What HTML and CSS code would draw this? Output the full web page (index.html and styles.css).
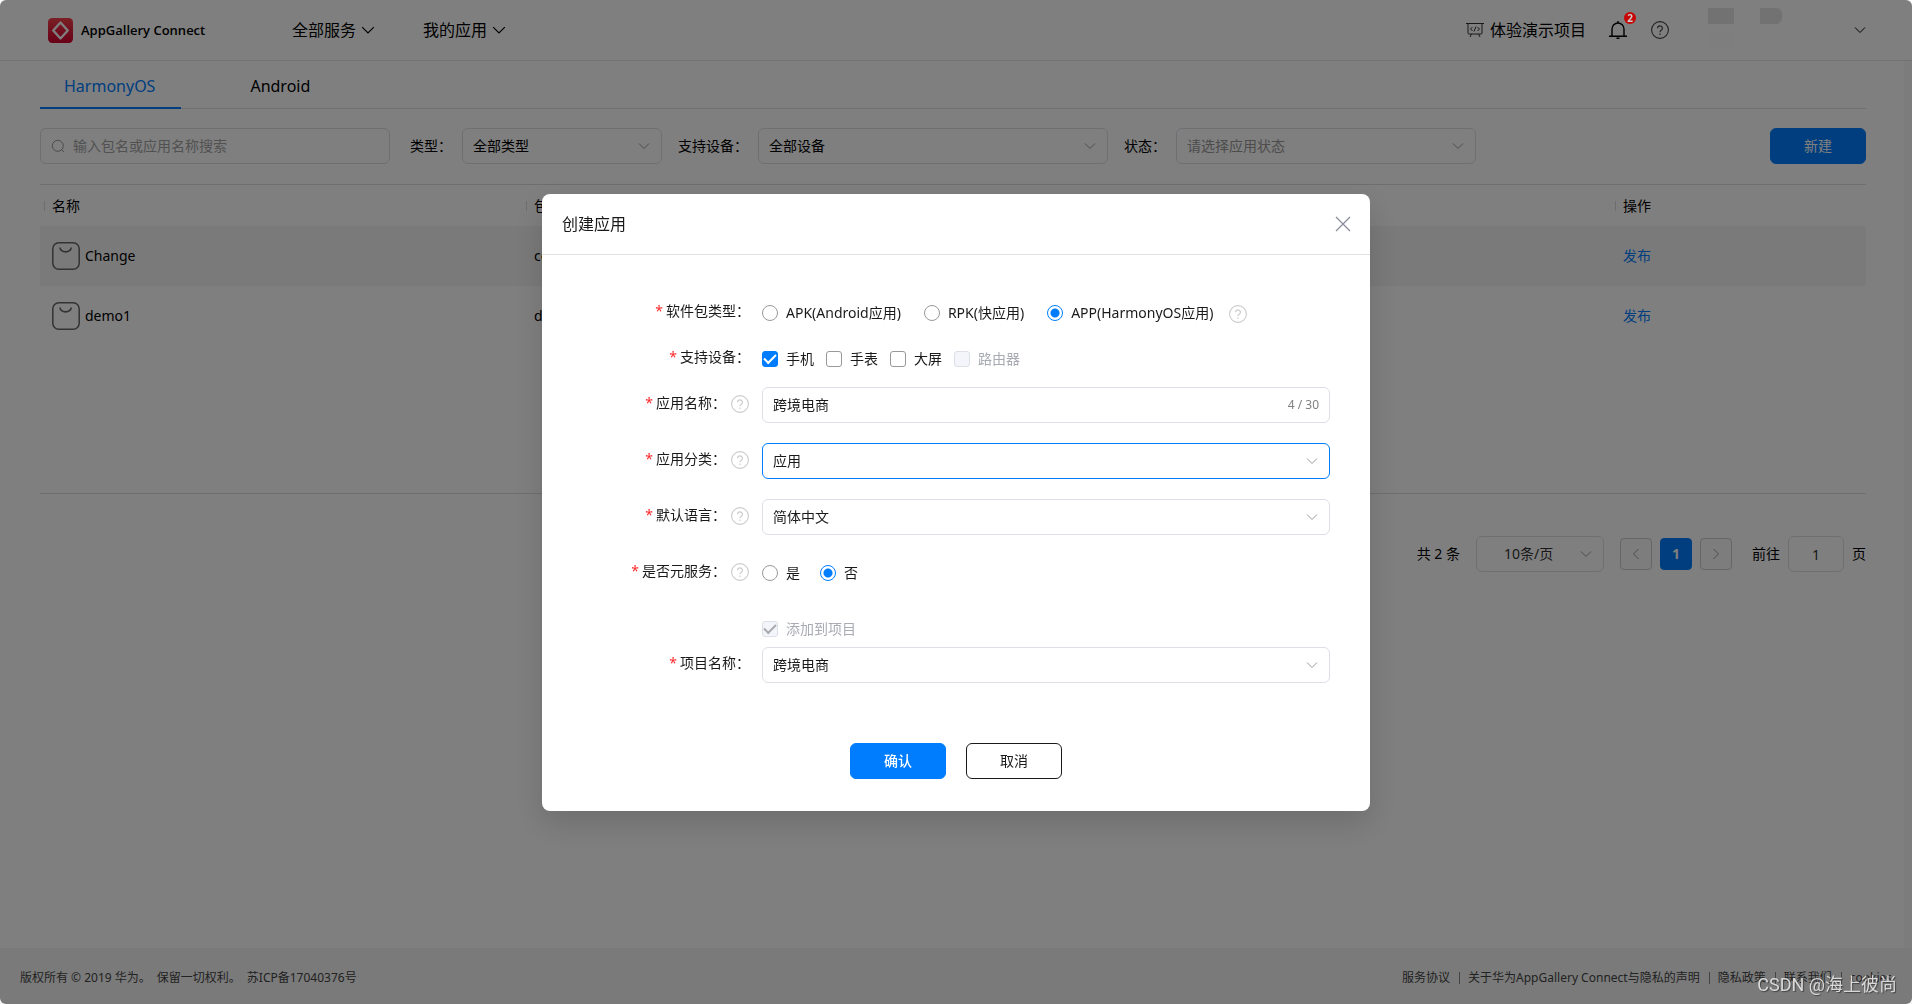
FILE: index.html
```html
<!DOCTYPE html>
<html lang="zh-CN">
<head>
<meta charset="utf-8">
<meta name="viewport" content="width=device-width, initial-scale=1">
<title>AppGallery Connect</title>
<link rel="stylesheet" href="styles.css">
</head>
<body>
<svg class="defs" aria-hidden="true">
  <symbol id="chevron" viewBox="0 0 12 12"><path d="M1 3.5l5 5 5-5" fill="none" stroke="currentColor"/></symbol>
  <symbol id="help" viewBox="0 0 18 18"><circle cx="9" cy="9" r="8.4" fill="none" stroke="currentColor" stroke-width="1.1"/><path d="M6.600 7.200a2.400 2.400 0 1 1 3.600 2.100C9.300 9.800 9 10.200 9 11.300" fill="none" stroke="currentColor" stroke-width="1.2"/><circle cx="9" cy="13.2" r=".8" fill="currentColor"/></symbol>
  <symbol id="bag" viewBox="0 0 28 28"><rect x=".8" y=".8" width="26.4" height="26.4" rx="6" fill="none" stroke="currentColor" stroke-width="1.5"/><path d="M8 5.5a5.6 4.4 0 0 0 11.2 0" fill="none" stroke="currentColor" stroke-width="1.6"/></symbol>
</svg>

<div class="page">
  <header class="topbar">
    <a class="brand" href="#">
      <svg class="brand-logo" viewBox="0 0 24 24" aria-hidden="true"><defs><linearGradient id="red" x2="0" y2="1"><stop stop-color="#f5404a"/><stop offset="1" stop-color="#d2002f"/></linearGradient></defs><rect width="24" height="24" rx="4" fill="url(#red)"/><path d="M12 4.4l7 7.6-7 7.6L5 12z" fill="none" stroke="#fff" stroke-width="2.2" stroke-linejoin="round"/></svg>
      <span>AppGallery Connect</span>
    </a>
    <nav class="topnav">
      <a href="#">全部服务<svg class="chev"><use href="#chevron"/></svg></a>
      <a href="#">我的应用<svg class="chev"><use href="#chevron"/></svg></a>
    </nav>
    <div class="tools">
      <a class="demo" href="#">
        <svg viewBox="0 0 18 16" aria-hidden="true"><path d="M0 1.5h18M2 1.5V11a1 1 0 0 0 1 1h12a1 1 0 0 0 1-1V1.5M5.5 12L4 15M12.500 12l1.500 3M6.500 5L4.500 7l2 2M11.500 5l2 2-2 2M10 4.500l-2 5" fill="none" stroke="currentColor" stroke-width="1"/></svg>
        体验演示项目
      </a>
      <a class="bell" href="#" aria-label="消息">
        <svg viewBox="0 0 18 18" aria-hidden="true"><path d="M3 15V8a6 6 0 0 1 12 0v7M0 15.300h18M9 2V0M7.500 17.200h3" fill="none" stroke="currentColor" stroke-width="1.400"/></svg>
        <span class="badge">2</span>
      </a>
      <a class="tophelp" href="#" aria-label="帮助"><svg><use href="#help"/></svg></a>
      <div class="account"><i></i><i></i><i></i></div>
      <button class="more" type="button" aria-label="账号菜单"><svg class="chev"><use href="#chevron"/></svg></button>
    </div>
  </header>

  <main class="content">
    <nav class="tabs">
      <a class="tab active" href="#">HarmonyOS</a>
      <a class="tab" href="#">Android</a>
    </nav>

    <form class="filters">
      <div class="search">
        <svg viewBox="0 0 14 14" aria-hidden="true"><circle cx="6.800" cy="6.800" r="5.500" fill="none" stroke="currentColor"/><path d="M10.500 10.500l2.500 2.500" stroke="currentColor"/></svg>
        <input type="text" aria-label="搜索" placeholder="输入包名或应用名称搜索">
      </div>
      <label for="f-type">类型：</label>
      <div class="select f-type"><select id="f-type"><option>全部类型</option></select><svg><use href="#chevron"/></svg></div>
      <label for="f-device">支持设备：</label>
      <div class="select f-device"><select id="f-device"><option>全部设备</option></select><svg><use href="#chevron"/></svg></div>
      <label for="f-state">状态：</label>
      <div class="select f-state empty"><select id="f-state"><option>请选择应用状态</option></select><svg><use href="#chevron"/></svg></div>
      <button class="btn primary create" type="button">新建</button>
    </form>

    <div class="table-area">
      <table>
        <colgroup><col class="c-name"><col><col class="c-action"></colgroup>
        <thead><tr><th>名称</th><th>包名</th><th>操作</th></tr></thead>
        <tbody>
          <tr class="hover"><td><span class="app"><svg><use href="#bag"/></svg>Change</span></td><td>com.change</td><td><a href="#">发布</a></td></tr>
          <tr><td><span class="app"><svg><use href="#bag"/></svg>demo1</span></td><td>demo1</td><td><a href="#">发布</a></td></tr>
        </tbody>
      </table>
    </div>

    <div class="pager">
      <span class="total">共 2 条</span>
      <div class="select page-size"><select aria-label="每页条数"><option>10条/页</option></select><svg><use href="#chevron"/></svg></div>
      <div class="pages">
        <button type="button" aria-label="上一页"><svg class="prev"><use href="#chevron"/></svg></button>
        <button type="button" class="current">1</button>
        <button type="button" aria-label="下一页"><svg class="next"><use href="#chevron"/></svg></button>
      </div>
      <label class="jump">前往<input type="text" value="1">页</label>
    </div>
  </main>

  <footer class="footer">
    <p><span>版权所有 © 2019 华为。</span><span>保留一切权利。</span><span>苏ICP备17040376号</span></p>
    <nav>
      <a href="#">服务协议</a><a href="#">关于华为AppGallery Connect与隐私的声明</a><a href="#">隐私政策</a><a href="#">联系我们</a><a href="#">cookies</a>
    </nav>
  </footer>
</div>

<div class="overlay">
  <section class="dialog" role="dialog" aria-modal="true" aria-labelledby="dlg-title">
    <header class="dialog-head">
      <h2 id="dlg-title">创建应用</h2>
      <button type="button" class="close" aria-label="关闭"><svg viewBox="0 0 16 16"><path d="M1 1l14 14M15 1L1 15" stroke="currentColor" stroke-width="1.300"/></svg></button>
    </header>
    <form class="form">
      <div class="row short" role="group" aria-labelledby="l-pkg">
        <span class="name" id="l-pkg"><b>*</b>软件包类型：</span>
        <div class="options radios wide">
          <label><input type="radio" name="pkg">APK(Android应用)</label>
          <label><input type="radio" name="pkg">RPK(快应用)</label>
          <label><input type="radio" name="pkg" checked>APP(HarmonyOS应用)</label>
          <svg class="help"><use href="#help"/></svg>
        </div>
      </div>
      <div class="row short" role="group" aria-labelledby="l-dev">
        <span class="name" id="l-dev"><b>*</b>支持设备：</span>
        <div class="options checks">
          <label><input type="checkbox" checked>手机</label>
          <label><input type="checkbox">手表</label>
          <label><input type="checkbox">大屏</label>
          <label><input type="checkbox" disabled>路由器</label>
        </div>
      </div>
      <div class="row">
        <label class="name" for="app-name"><b>*</b>应用名称：<svg class="help"><use href="#help"/></svg></label>
        <div class="field"><input id="app-name" type="text" value="跨境电商"><span>4 / 30</span></div>
      </div>
      <div class="row">
        <label class="name" for="app-cat"><b>*</b>应用分类：<svg class="help"><use href="#help"/></svg></label>
        <div class="select focus"><select id="app-cat"><option>应用</option></select><svg><use href="#chevron"/></svg></div>
      </div>
      <div class="row">
        <label class="name" for="app-lang"><b>*</b>默认语言：<svg class="help"><use href="#help"/></svg></label>
        <div class="select"><select id="app-lang"><option>简体中文</option></select><svg><use href="#chevron"/></svg></div>
      </div>
      <div class="row" role="group" aria-labelledby="l-meta">
        <span class="name" id="l-meta"><b>*</b>是否元服务：<svg class="help"><use href="#help"/></svg></span>
        <div class="options radios">
          <label><input type="radio" name="meta">是</label>
          <label><input type="radio" name="meta" checked>否</label>
        </div>
      </div>
      <div class="row tight">
        <div class="options checks"><label><input type="checkbox" checked disabled>添加到项目</label></div>
      </div>
      <div class="row last">
        <label class="name" for="project"><b>*</b>项目名称：</label>
        <div class="select"><select id="project"><option>跨境电商</option></select><svg><use href="#chevron"/></svg></div>
      </div>
      <div class="actions">
        <button type="button" class="btn primary strong">确认</button>
        <button type="button" class="btn outline">取消</button>
      </div>
    </form>
  </section>
</div>
<div class="watermark">CSDN @海上彼尚</div>
</body>
</html>
```
FILE: styles.css
```css
* { box-sizing: border-box; }

body {
  margin: 0;
  background: #fff;
  color: #000;
  font: 14px/20px "Noto Sans", "Noto Sans CJK SC", sans-serif;
}

a { color: inherit; text-decoration: none; }
p, h2 { margin: 0; }
svg { display: block; flex: none; }
button, input, select { font: inherit; color: inherit; }
button { padding: 0; cursor: pointer; }
.defs { position: absolute; width: 0; height: 0; }

.page { min-height: 100vh; display: flex; flex-direction: column; }

/* Top bar */
.topbar {
  display: flex;
  align-items: center;
  height: 61px;
  padding: 0 46px 0 48px;
  border-bottom: 1px solid #e4e4e4;
  font-size: 16px;
}
.topbar a { display: flex; align-items: center; }
.chev { width: 14px; height: 14px; }
.brand {
  gap: 8px;
  width: 154px;
  font-family: "Open Sans", sans-serif;
  font-size: 13px;
  font-weight: 600;
  white-space: nowrap;
}
.brand-logo { width: 25px; height: 25px; }
.topnav { display: flex; gap: 48px; margin-left: 90px; }
.topnav a { gap: 5px; }
.tools { display: flex; align-items: center; margin-left: auto; }
.demo { gap: 6px; }
.demo svg { width: 18px; height: 16px; color: #333; }
.bell { position: relative; margin-left: 23px; }
.bell svg { width: 18px; height: 18px; }
.badge {
  position: absolute;
  z-index: 20;
  left: 15px;
  top: -9px;
  width: 12px;
  height: 12px;
  border-radius: 50%;
  background: #c80505;
  color: #ccc;
  font-size: 10px;
  font-weight: 700;
  line-height: 12px;
  text-align: center;
}
.tophelp { margin-left: 24px; color: #444; }
.tophelp svg { width: 18px; height: 18px; }
.account {
  display: grid;
  grid-template-columns: 26px 22px;
  gap: 8px 26px;
  width: 146px;
  margin: 0 0 4px 39px;
}
.account i { height: 16px; background: #e4e4e4; }
.account i:nth-child(2) { border-top-right-radius: 6px; border-bottom-right-radius: 6px; }
.account i:nth-child(3) { background: #fcfcfc; }
.more { border: 0; background: none; }
.more .chev { width: 12px; height: 12px; }

/* Content */
.content {
  flex: 1;
  padding: 0 38px 0 40px;
  border-right: 8px solid #f8f8f8;
}
.tabs {
  display: flex;
  gap: 45px;
  height: 48px;
  border-bottom: 1px solid #e0e0e0;
  font-size: 16px;
}
.tab { height: 48px; padding: 15px 26px 0 24px; }
.tab.active { color: #007dff; border-bottom: 2px solid #007dff; }

.filters { display: flex; align-items: center; margin: 19px 0 20px; }
.filters > label { margin: 0 10px 0 16px; white-space: nowrap; }
.search {
  display: flex;
  align-items: center;
  gap: 8px;
  width: 350px;
  height: 36px;
  margin-right: 4px;
  padding: 0 10px;
  border: 1px solid #dcdcdc;
  border-radius: 6px;
  color: #999;
}
.search svg { width: 14px; height: 14px; }
.search input { flex: 1; min-width: 0; padding: 0; border: 0; outline: 0; background: none; }
.search input::placeholder { color: #a3a3a3; opacity: 1; }

.select { position: relative; height: 36px; }
.select select {
  appearance: none;
  width: 100%;
  height: 36px;
  padding: 0 32px 0 10px;
  border: 1px solid #dcdfe6;
  border-radius: 6px;
  background: #fff;
  outline: 0;
}
.select svg {
  position: absolute;
  right: 12px;
  top: 12px;
  width: 12px;
  height: 12px;
  color: #999;
  pointer-events: none;
}
.select.focus select { border-color: #007dff; }
.select.empty select { color: #999; }
.f-type { width: 200px; }
.f-device { width: 350px; }
.f-state { width: 300px; }

.btn { width: 96px; height: 36px; border: 1px solid #007dff; border-radius: 6px; }
.btn.primary { background: #007dff; color: #fff; }
.btn.strong { font-weight: 500; }
.btn.outline { background: #fff; border-color: #1a1a1a; color: #1a1a1a; }
.create { margin-left: auto; }

/* Table */
.table-area { min-height: 310px; border: 1px solid #ddd; border-width: 1px 0; }
table { width: 100%; table-layout: fixed; border-collapse: collapse; }
.c-name { width: 482px; }
.c-action { width: 255px; }
th, td { padding: 0 12px; text-align: left; font-weight: 400; }
th { height: 41px; background: linear-gradient(#ddd, #ddd) 4px 16px / 1px 10px no-repeat; }
td { height: 60px; }
td a { color: #007dff; }
.hover { background: #f5f5f5; }
.app { display: flex; align-items: center; gap: 5px; }
.app svg { width: 28px; height: 28px; color: #666; }

/* Pagination */
.pager { display: flex; align-items: center; gap: 16px; justify-content: flex-end; margin-top: 42px; }
.page-size { width: 128px; }
.page-size select { padding-left: 27px; color: #333; }
.pages { display: flex; gap: 8px; }
.pages button {
  display: grid;
  place-items: center;
  width: 32px;
  height: 32px;
  border: 1px solid #ccc;
  border-radius: 4px;
  background: #fafafa;
  color: #999;
}
.pages svg { width: 12px; height: 12px; }
.pages .current { border-color: #007dff; background: #007dff; color: #fff; font-weight: 700; }
.prev { transform: rotate(90deg); }
.next { transform: rotate(-90deg); }
.jump { display: flex; align-items: center; gap: 8px; margin-left: 4px; }
.jump input {
  width: 56px;
  height: 36px;
  padding: 0;
  border: 1px solid #dcdfe6;
  border-radius: 6px;
  text-align: center;
  color: #333;
}

/* Footer */
.footer {
  display: flex;
  align-items: center;
  justify-content: space-between;
  height: 56px;
  padding: 4px 20px 0;
  background: #f5f5f5;
  color: #444;
  font-size: 12px;
}
.footer p { display: flex; gap: 6px; }
.footer nav { display: flex; align-items: center; }
.footer nav a { line-height: 12px; }
.footer nav a + a { margin-left: 9px; padding-left: 8px; border-left: 1px solid #888; }

/* Dialog */
.overlay {
  position: fixed;
  inset: 0;
  z-index: 10;
  display: flex;
  align-items: center;
  justify-content: center;
  background: rgba(0, 0, 0, 0.5);
  border-radius: 6px;
}
.dialog {
  width: 100%;
  max-width: 828px;
  background: #fff;
  border-radius: 8px;
  box-shadow: 0 12px 32px rgba(0, 0, 0, 0.15);
  color: #1a1a1a;
}
.dialog-head {
  display: flex;
  align-items: center;
  justify-content: space-between;
  height: 61px;
  padding: 0 19px 0 20px;
  border-bottom: 1px solid #e0e0e0;
}
.dialog-head h2 { font-size: 16px; font-weight: 400; }
.close { border: 0; background: none; color: #8a8c99; }
.close svg { width: 16px; height: 16px; }

.form { padding: 40px 40px 32px 0; }
.row {
  display: grid;
  grid-template-columns: 208px minmax(0, 1fr);
  column-gap: 12px;
  min-height: 36px;
  margin-bottom: 20px;
}
.row.short { margin-bottom: 10px; }
.row.tight { margin-bottom: 0; }
.row.last { margin-bottom: 60px; }
.name { display: flex; align-items: center; justify-content: flex-end; height: 32px; }
.name b { margin-right: 3px; font-weight: 400; color: #fa2a2d; }
.help { width: 18px; height: 18px; color: #ccc; }
.name .help { margin: 2px 1px 0 5px; }
.row > :last-child { grid-column: 2; }

.options { display: flex; align-items: center; height: 36px; }
.options label { display: flex; align-items: center; gap: 8px; }
.radios { gap: 20px; }
.radios.wide { gap: 23px; }
.radios .help { margin: 2px 0 0 -7px; }
.checks { gap: 12px; }
.options input {
  appearance: none;
  flex: none;
  width: 16px;
  height: 16px;
  margin: 0;
  border: 1px solid #999;
  background: #fff;
}
.options input[type="radio"] { border-radius: 50%; }
.options input[type="radio"]:checked {
  border-color: #007dff;
  background: radial-gradient(circle, #007dff 4px, #fff 5px);
}
.options input[type="checkbox"] { display: grid; place-items: center; border-radius: 3px; }
.options input[type="checkbox"]:checked { background: #007dff; border-color: #007dff; }
.options input[type="checkbox"]:checked::after {
  content: "";
  width: 10px;
  height: 5px;
  margin-bottom: 3px;
  border: solid #fff;
  border-width: 0 0 2px 2px;
  transform: rotate(-45deg);
}
.options input[type="checkbox"]:disabled { background: #f3f5fa; border-color: #dcdfe6; }
.options input[type="checkbox"]:disabled::after { border-color: #a8abb2; }
.options label:has(:disabled) { color: #a8abb2; }

.field {
  display: flex;
  align-items: center;
  height: 36px;
  padding: 0 10px;
  border: 1px solid #dcdfe6;
  border-radius: 6px;
}
.field input { flex: 1; min-width: 0; padding: 0; border: 0; outline: 0; background: none; }
.field span { color: #808080; font-size: 12px; }

.actions { display: flex; justify-content: center; gap: 20px; padding-left: 40px; }

.watermark {
  position: fixed;
  z-index: 30;
  right: 15px;
  bottom: 7px;
  color: #d8d8d8;
  font-family: Roboto, "Noto Sans CJK SC", sans-serif;
  font-size: 18px;
  line-height: 24px;
  text-shadow: 1px 1px 1px #444;
}
```
